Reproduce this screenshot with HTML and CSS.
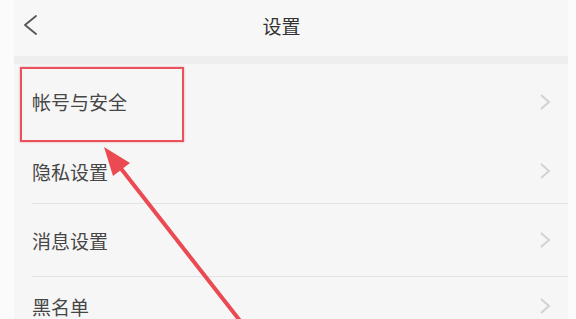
FILE: index.html
```html
<!DOCTYPE html>
<html lang="zh-CN">
<head>
<meta charset="utf-8">
<title>设置</title>
<link rel="stylesheet" href="styles.css">
</head>
<body>
<div class="screen">
  <header class="topbar">
    <span class="back">
      <svg width="16" height="20" viewBox="0 0 16 20"><polyline points="13,1 2,10 13,19" fill="none" stroke="#555" stroke-width="1.8" stroke-linecap="round" stroke-linejoin="round"/></svg>
    </span>
    <h1 class="title">设置</h1>
    <span class="spacer"></span>
  </header>
  <div class="band"></div>
  <ul class="list">
    <li class="row row-first"><span class="label">帐号与安全</span><svg class="chev" width="14" height="20" viewBox="0 0 14 20"><polyline points="3,3 11,10 3,17" fill="none" stroke="#d2d2d2" stroke-width="2"/></svg></li>
    <li class="row row-second"><span class="label">隐私设置</span><svg class="chev" width="14" height="20" viewBox="0 0 14 20"><polyline points="3,3 11,10 3,17" fill="none" stroke="#d2d2d2" stroke-width="2"/></svg></li>
    <li class="row row-third"><span class="label">消息设置</span><svg class="chev" width="14" height="20" viewBox="0 0 14 20"><polyline points="3,3 11,10 3,17" fill="none" stroke="#d2d2d2" stroke-width="2"/></svg></li>
    <li class="row row-last"><span class="label">黑名单</span><svg class="chev" width="14" height="20" viewBox="0 0 14 20"><polyline points="3,3 11,10 3,17" fill="none" stroke="#d2d2d2" stroke-width="2"/></svg></li>
  </ul>
</div>
<div class="highlight"></div>
<svg class="arrow" width="576" height="319" viewBox="0 0 576 319">
  <line x1="119" y1="166" x2="241" y2="322" stroke="#ec4a52" stroke-width="4" stroke-linecap="round"/>
  <polygon points="104,147 130,163 113,176" fill="#ec4a52"/>
</svg>
</body>
</html>
```
FILE: styles.css
```css
html, body {
  margin: 0;
  padding: 0;
  height: 100%;
  overflow: hidden;
}
body {
  background: #fbfbfb;
  font-family: "Noto Sans CJK SC", "Noto Sans", sans-serif;
  position: relative;
}
.screen {
  margin: 0 8px 0 14px;
  height: 319px;
  overflow: hidden;
  background: #f6f6f6;
  display: flex;
  flex-direction: column;
}
.screen > * {
  flex-shrink: 0;
}
.topbar {
  box-sizing: border-box;
  height: 56px;
  padding-bottom: 6px;
  display: grid;
  grid-template-columns: 1fr auto 1fr;
  align-items: center;
  padding-left: 9px;
  padding-right: 28px;
  background: #f7f7f7;
}
.back {
  display: flex;
  align-items: center;
}
.title {
  margin: 0;
  font-size: 19px;
  font-weight: normal;
  color: #333;
  line-height: 1;
}
.band {
  height: 8px;
  background: #eeeeee;
}
.list {
  list-style: none;
  margin: 0;
  padding: 0;
}
.row {
  display: flex;
  align-items: center;
  justify-content: space-between;
  margin-left: 18px;
  padding: 0 16px 0 0;
  font-size: 19px;
  color: #464646;
}
.label {
  line-height: 1;
}
.row-first { height: 75px; }
.row-second {
  height: 64px;
  border-bottom: 1px solid #e3e3e3;
}
.row-third {
  height: 72px;
  border-bottom: 1px solid #e3e3e3;
}
.row-last { height: 58px; }
.chev { display: block; }
.highlight {
  position: absolute;
  left: 20px;
  top: 67px;
  width: 160px;
  height: 71px;
  border: 2px solid #e9525c;
  box-shadow: 0 0 2px rgba(233, 82, 92, 0.5);
}
.arrow {
  position: absolute;
  left: 0;
  top: 0;
}
```
